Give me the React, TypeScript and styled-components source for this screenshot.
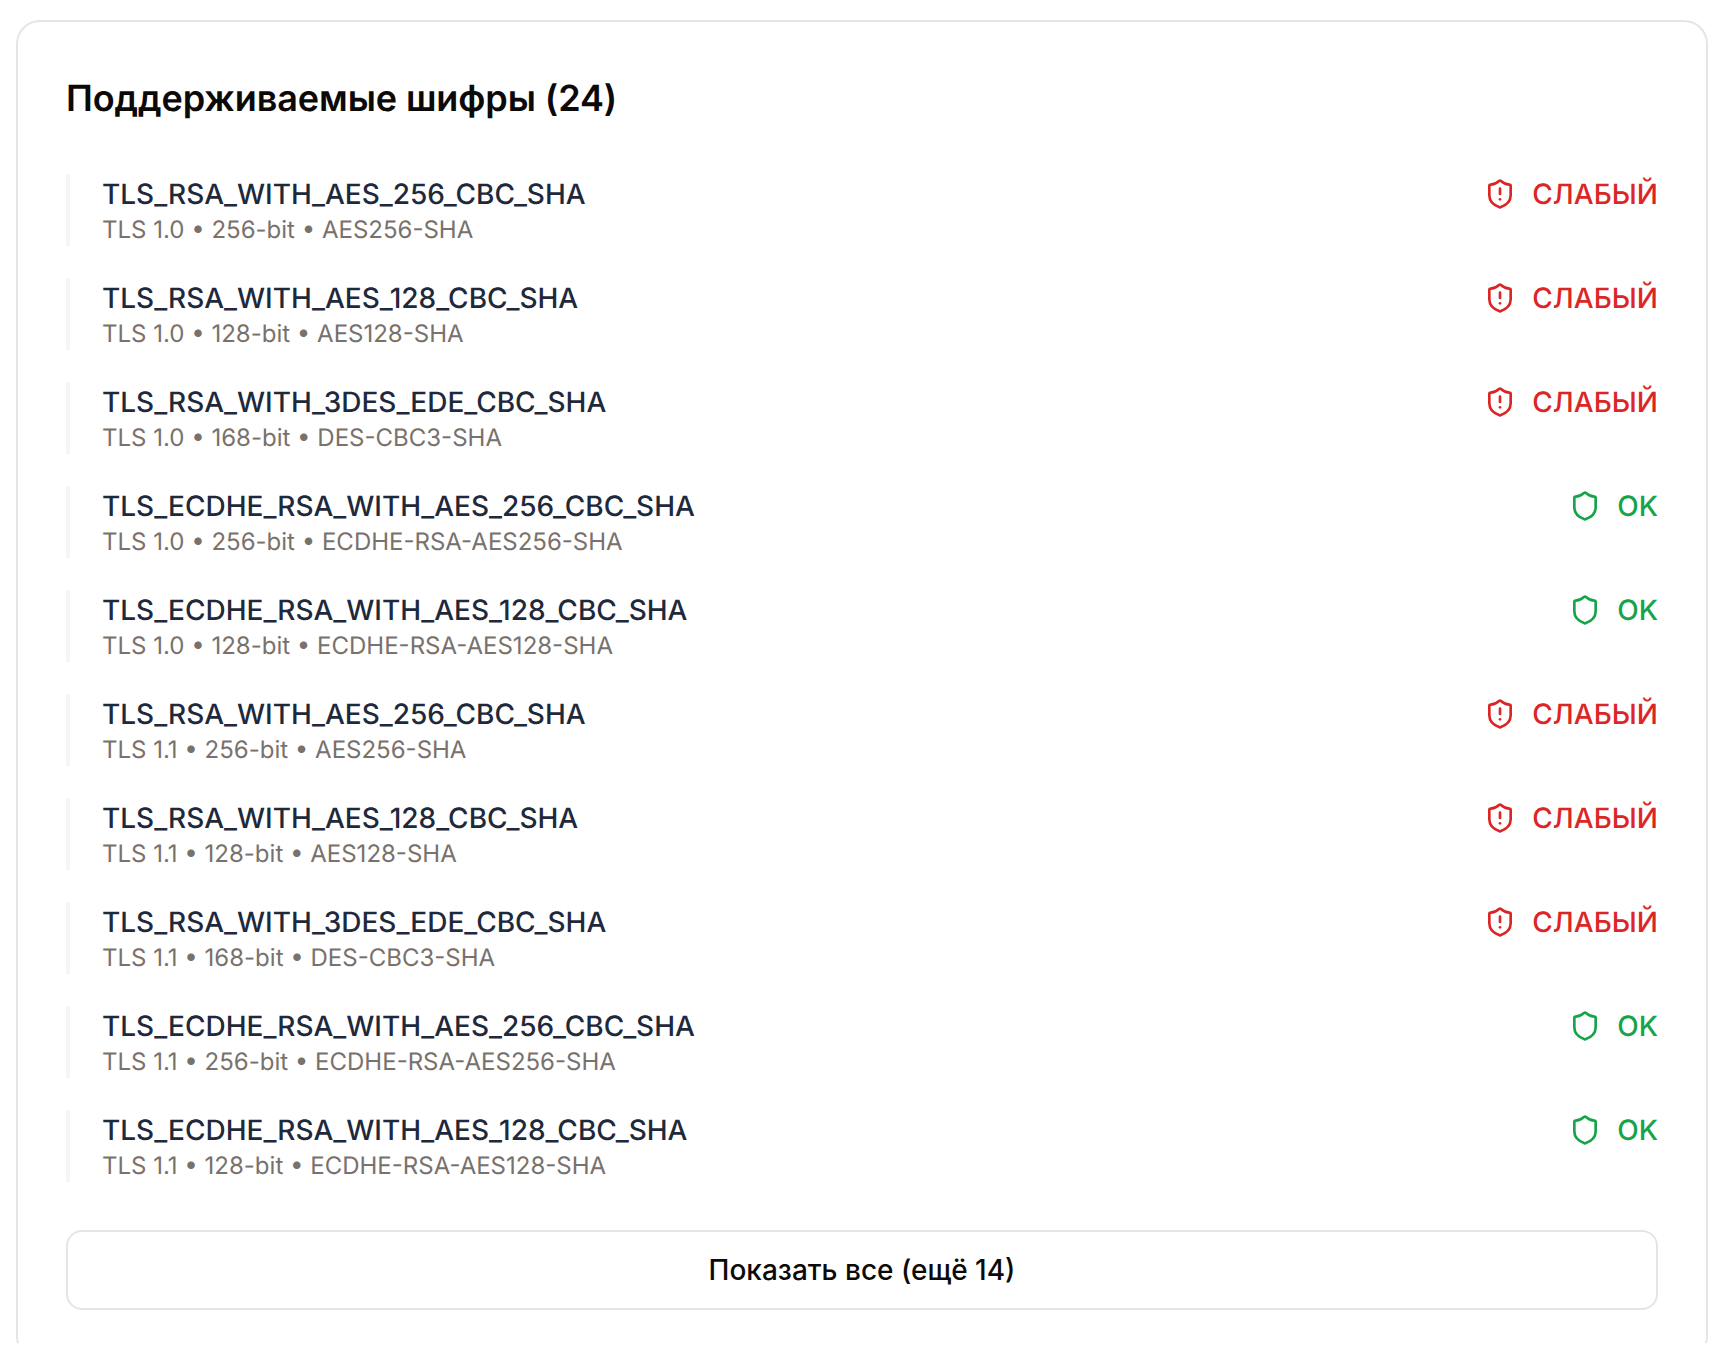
import React from "react";
import styled, { createGlobalStyle } from "styled-components";
import { Shield, ShieldAlert } from "lucide-react";

type Cipher = {
  name: string;
  version: string;
  bits: number;
  alias: string;
  weak: boolean;
};

const GlobalStyle = createGlobalStyle`
  html, body {
    margin: 0;
    background: #fff;
    text-rendering: geometricPrecision;
  }
`;

const Frame = styled.div`
  height: 1343px;
  overflow: hidden;
  padding: 20px 14px 0 16px;
  box-sizing: border-box;
  font-family: Inter, "Noto Sans", sans-serif;
`;

const Card = styled.section`
  border: 2px solid #e7e5e4;
  border-radius: 24px;
  padding: 48px;
  background: #fff;
`;

const Title = styled.h2`
  margin: 0 0 48px;
  font-size: 36px;
  line-height: 56px;
  font-weight: 600;
  letter-spacing: -0.09px;
  color: #0c0a09;
`;

const List = styled.div`
  display: flex;
  flex-direction: column;
  gap: 32px;
`;

const Row = styled.div`
  display: flex;
  justify-content: space-between;
  align-items: flex-start;
  height: 72px;
  padding-left: 32px;
  border-left: 4px solid #f5f5f4;
`;

const Info = styled.div`
  display: flex;
  flex-direction: column;
`;

const Name = styled.div`
  font-size: 28px;
  line-height: 40px;
  font-weight: 500;
  color: #1e293b;
`;

const Meta = styled.div`
  font-size: 24px;
  line-height: 32px;
  color: #78716c;
`;

const Status = styled.div<{ $weak: boolean }>`
  display: flex;
  align-items: center;
  gap: 16px;
  height: 40px;
  font-size: 28px;
  font-weight: 500;
  color: ${({ $weak }) => ($weak ? "#dc2626" : "#16a34a")};
`;

const ShowAll = styled.button`
  display: block;
  width: 100%;
  height: 80px;
  margin-top: 48px;
  border: 2px solid #e7e5e4;
  border-radius: 16px;
  background: #fff;
  font-family: inherit;
  font-size: 28px;
  font-weight: 500;
  color: #0c0a09;
`;

const suites: [string, number, string, boolean][] = [
  ["TLS_RSA_WITH_AES_256_CBC_SHA", 256, "AES256-SHA", true],
  ["TLS_RSA_WITH_AES_128_CBC_SHA", 128, "AES128-SHA", true],
  ["TLS_RSA_WITH_3DES_EDE_CBC_SHA", 168, "DES-CBC3-SHA", true],
  ["TLS_ECDHE_RSA_WITH_AES_256_CBC_SHA", 256, "ECDHE-RSA-AES256-SHA", false],
  ["TLS_ECDHE_RSA_WITH_AES_128_CBC_SHA", 128, "ECDHE-RSA-AES128-SHA", false],
];

const ciphers: Cipher[] = ["TLS 1.0", "TLS 1.1"].flatMap((version) =>
  suites.map(([name, bits, alias, weak]) => ({ name, version, bits, alias, weak }))
);

const App = () => {
  return (
    <Frame>
      <GlobalStyle />
      <Card>
        <Title>Поддерживаемые шифры (24)</Title>
        <List>
          {ciphers.map((cipher) => (
            <Row key={`${cipher.version}-${cipher.name}`}>
              <Info>
                <Name>{cipher.name}</Name>
                <Meta>
                  {cipher.version} • {cipher.bits}-bit • {cipher.alias}
                </Meta>
              </Info>
              <Status $weak={cipher.weak}>
                {cipher.weak ? <ShieldAlert size={32} /> : <Shield size={32} />}
                {cipher.weak ? "СЛАБЫЙ" : "OK"}
              </Status>
            </Row>
          ))}
        </List>
        <ShowAll>Показать все (ещё 14)</ShowAll>
      </Card>
    </Frame>
  );
};

export default App;
